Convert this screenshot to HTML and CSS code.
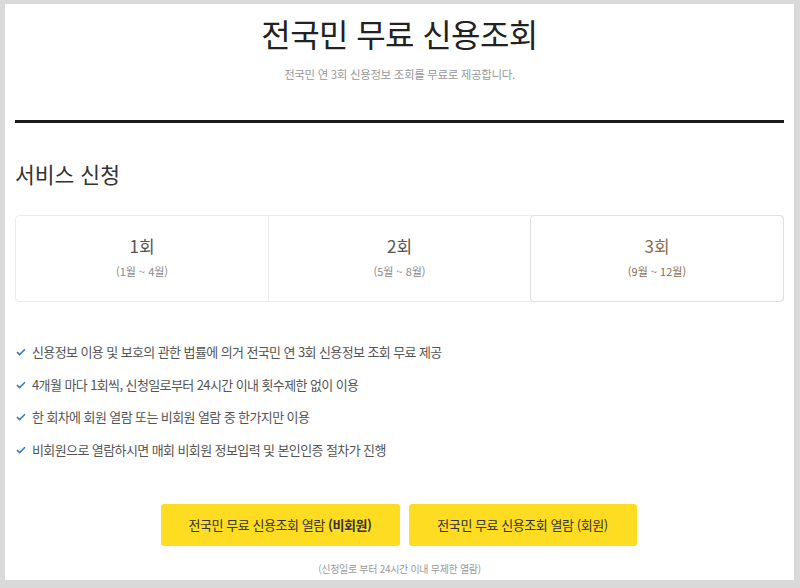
FILE: index.html
```html
<!DOCTYPE html>
<html lang="ko">
<head>
<meta charset="utf-8">
<link rel="stylesheet" href="styles.css">
</head>
<body>
<div class="frame">
  <div class="panel">
    <header class="head">
      <h1 class="title">전국민 무료 신용조회</h1>
      <p class="sub">전국민 연 3회 신용정보 조회를 무료로 제공합니다.</p>
    </header>
    <h2 class="section">서비스 신청</h2>
    <div class="cards">
      <div class="card">
        <div class="round">1회</div>
        <div class="period">(1월 ~ 4월)</div>
      </div>
      <div class="card mid">
        <div class="round">2회</div>
        <div class="period">(5월 ~ 8월)</div>
      </div>
      <div class="card active">
        <div class="round">3회</div>
        <div class="period">(9월 ~ 12월)</div>
      </div>
    </div>
    <ul class="list">
      <li><svg class="chk" viewBox="0 0 10 8"><path d="M1 4.2 L3.6 6.6 L9 1.2" fill="none" stroke="#3a78c9" stroke-width="1.6"/></svg>신용정보 이용 및 보호의 관한 법률에 의거 전국민 연 3회 신용정보 조회 무료 제공</li>
      <li><svg class="chk" viewBox="0 0 10 8"><path d="M1 4.2 L3.6 6.6 L9 1.2" fill="none" stroke="#3a78c9" stroke-width="1.6"/></svg>4개월 마다 1회씩, 신청일로부터 24시간 이내 횟수제한 없이 이용</li>
      <li><svg class="chk" viewBox="0 0 10 8"><path d="M1 4.2 L3.6 6.6 L9 1.2" fill="none" stroke="#3a78c9" stroke-width="1.6"/></svg>한 회차에 회원 열람 또는 비회원 열람 중 한가지만 이용</li>
      <li><svg class="chk" viewBox="0 0 10 8"><path d="M1 4.2 L3.6 6.6 L9 1.2" fill="none" stroke="#3a78c9" stroke-width="1.6"/></svg>비회원으로 열람하시면 매회 비회원 정보입력 및 본인인증 절차가 진행</li>
    </ul>
    <div class="buttons">
      <button class="btn b1">전국민 무료 신용조회 열람 <b>(비회원)</b></button>
      <button class="btn b2">전국민 무료 신용조회 열람 (회원)</button>
    </div>
    <p class="note">(신청일로 부터 24시간 이내 무제한 열람)</p>
  </div>
</div>
</body>
</html>
```

FILE: styles.css
```css
html, body {
  margin: 0;
  padding: 0;
  background: #d9d9d9;
}
body {
  font-family: "Noto Sans CJK KR", "Noto Sans", sans-serif;
  width: 800px;
  height: 588px;
  overflow: hidden;
}
.frame {
  padding: 4px 6px 8px 5px;
  height: 576px;
}
.panel {
  background: #fff;
  height: 576px;
  padding: 0 10px;
  box-sizing: border-box;
}
.head {
  text-align: center;
  border-bottom: 3px solid #1a1a1a;
  height: 119px;
  box-sizing: border-box;
}
.title {
  margin: 0;
  padding-top: 7px;
  font-size: 32px;
  font-weight: 400;
  color: #222;
  line-height: 44px;
  letter-spacing: -0.6px;
}
.sub {
  margin: 11px 0 0;
  font-size: 11.5px;
  color: #999;
  line-height: 16px;
  letter-spacing: -0.35px;
}
.section {
  margin: 34px 0 0;
  font-size: 21.5px;
  font-weight: 400;
  color: #333;
  line-height: 34px;
}
.cards {
  display: flex;
  margin-top: 24px;
  height: 85px;
  border: 1px solid #ececec;
  border-radius: 4px;
}
.card {
  flex: 253 1 0;
  display: flex;
  flex-direction: column;
  align-items: center;
  justify-content: center;
  border-left: 1px solid #ececec;
}
.card.mid {
  flex-grow: 262;
}
.card:first-child {
  border-left: none;
}
.card.active {
  border: 1px solid #e0e0e0;
  border-radius: 4px;
  margin: -1px -1px -1px 0;
}
.round {
  font-size: 17px;
  color: #555;
  line-height: 24px;
  margin-top: -4px;
}
.period {
  font-size: 11px;
  color: #888;
  line-height: 16px;
  margin-top: 5px;
}
.card.active .round {
  color: #8b6a4d;
}
.card.active .period {
  color: #8b6a4d;
}
.list {
  list-style: none;
  margin: 40px 0 0;
  padding: 0 0 0 1px;
}
.list li {
  display: flex;
  align-items: center;
  font-size: 13px;
  color: #555;
  line-height: 20px;
  height: 20px;
  margin-bottom: 12.5px;
  letter-spacing: -0.6px;
}
.chk {
  width: 10px;
  height: 8px;
  margin-right: 6px;
}
.buttons {
  display: flex;
  justify-content: center;
  gap: 9px;
  margin-top: 44px;
  padding-right: 2px;
}
.btn {
  height: 42px;
  border: none;
  border-radius: 3px;
  background: #fddc22;
  font-family: inherit;
  font-size: 13px;
  color: #333;
  padding: 0;
  letter-spacing: -0.45px;
}
.btn b {
  font-weight: 700;
}
.b1 { width: 239px; }
.b2 { width: 228px; }
.note {
  margin: 16px 0 0;
  text-align: center;
  font-size: 10px;
  color: #999;
  line-height: 14px;
  letter-spacing: -0.3px;
}
```
